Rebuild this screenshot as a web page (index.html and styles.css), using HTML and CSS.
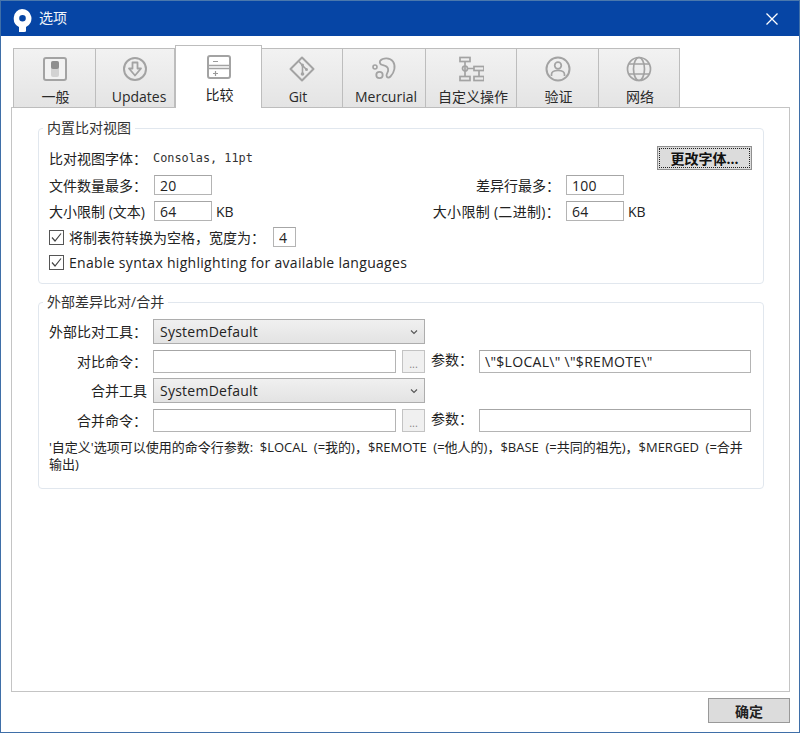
FILE: index.html
```html
<!DOCTYPE html>
<html lang="zh-CN">
<head>
<meta charset="utf-8">
<title>选项</title>
<link rel="stylesheet" href="styles.css">
</head>
<body>
<div class="window">
  <header class="titlebar">
    <svg class="logo" width="22" height="24" viewBox="0 0 22 24"><path fill="#fff" fill-rule="evenodd" d="M11 1a9.500 9.500 0 0 1 4 18.100V23a.8.8 0 0 1-.6.8l-5.600 .9a.8.8 0 0 1-.8-.8v-5A9.500 9.500 0 0 1 11 1zm.5 6a3.300 3.300 0 1 0 0 6.600 3.300 3.300 0 0 0 0-6.600z"/></svg>
    <span class="title">选项</span>
    <svg class="close" width="14" height="14" viewBox="0 0 14 14"><path d="M1.500 1.500l11 11M12.500 1.500l-11 11" stroke="#fff" stroke-width="1.300" fill="none"/></svg>
  </header>
  <main class="content">
    <nav class="tabs">
      <div class="tab tab-general">
        <svg class="icon" viewBox="0 0 26 26"><rect x="2" y="2" width="22" height="22" rx="2" fill="#f2f2f2" stroke="#a3a3a3" stroke-width="2"/><rect x="9" y="5" width="8" height="16" rx="2" fill="#d2d2d2"/><rect x="9" y="5" width="8" height="8" rx="2" fill="#8e8e8e"/></svg>
        <span>一般</span>
      </div>
      <div class="tab tab-updates">
        <svg class="icon" viewBox="0 0 26 26"><circle cx="13" cy="13" r="11" fill="none" stroke="#a3a3a3" stroke-width="2"/><path d="M10.500 6.500h5v6h3.500L13 19.500 7 12.500h3.500z" fill="none" stroke="#a3a3a3" stroke-width="1.800" stroke-linejoin="round"/></svg>
        <span>Updates</span>
      </div>
      <div class="tab tab-active tab-compare">
        <svg class="icon" viewBox="0 0 26 26"><rect x="2" y="2" width="22" height="22" rx="2" fill="none" stroke="#a3a3a3" stroke-width="2"/><path d="M2 11.500h22M2 14.500h22" stroke="#a3a3a3" stroke-width="1.500" fill="none"/><path d="M7 7.500h5M7 19.500h5M9.500 17v5" stroke="#9a9a9a" stroke-width="1.200" fill="none"/></svg>
        <span>比较</span>
      </div>
      <div class="tab tab-git">
        <svg class="icon" viewBox="0 0 26 26"><path d="M13 1.500L24.500 13 13 24.500 1.500 13z" fill="none" stroke="#a3a3a3" stroke-width="2" stroke-linejoin="round"/><path d="M10 5.500l3.500 4v8M13.500 9.500l4 4" fill="none" stroke="#a3a3a3" stroke-width="1.600"/><circle cx="13.500" cy="18" r="1.800" fill="#a3a3a3"/><circle cx="13.500" cy="9" r="1.500" fill="#a3a3a3"/><circle cx="17.500" cy="13.500" r="1.500" fill="#a3a3a3"/></svg>
        <span>Git</span>
      </div>
      <div class="tab tab-hg">
        <svg class="icon" viewBox="0 0 26 26"><path d="M9 5C12 1.500 19 1.500 22 5.500c3 4.500 1.500 11-2.500 15-1.500 1.500-4 1.500-4-1 0-2.500 2.500-3.500 1.500-7-.7-2.500-3.500-3-5.500-3.500C9.500 8.500 8.500 7 9 5z" fill="none" stroke="#a3a3a3" stroke-width="1.800"/><circle cx="4" cy="11" r="2" fill="none" stroke="#a3a3a3" stroke-width="1.600"/><circle cx="8.500" cy="19" r="3.200" fill="none" stroke="#a3a3a3" stroke-width="1.800"/></svg>
        <span>Mercurial</span>
      </div>
      <div class="tab tab-custom">
        <svg class="icon" viewBox="0 0 26 26"><g fill="none" stroke="#a3a3a3" stroke-width="1.700"><rect x="2" y="1.500" width="10" height="4"/><rect x="2" y="20.500" width="10" height="4"/><rect x="16" y="10.500" width="10" height="4"/><rect x="16" y="20.500" width="10" height="4"/><path d="M7 5.500v15M10 12.500h6M21 14.500v6"/><circle cx="7" cy="12.500" r="2.500"/></g></svg>
        <span>自定义操作</span>
      </div>
      <div class="tab tab-auth">
        <svg class="icon" viewBox="0 0 26 26"><circle cx="13" cy="13" r="11.500" fill="none" stroke="#a3a3a3" stroke-width="2"/><circle cx="13" cy="9.500" r="3.300" fill="none" stroke="#a3a3a3" stroke-width="1.700"/><path d="M6.500 20v-1.500c0-2.500 2.500-4 6.500-4s6.500 1.500 6.500 4V20" fill="none" stroke="#a3a3a3" stroke-width="1.700"/></svg>
        <span>验证</span>
      </div>
      <div class="tab tab-network">
        <svg class="icon" viewBox="0 0 26 26"><g fill="none" stroke="#a3a3a3" stroke-width="1.700"><circle cx="13" cy="13" r="11.500"/><ellipse cx="13" cy="13" rx="5.500" ry="11.500"/><path d="M3 8h20M3 18h20"/></g></svg>
        <span>网络</span>
      </div>
    </nav>
    <section class="panel">
      <fieldset class="group group-builtin">
        <legend>内置比对视图</legend>
        <div class="row-font">
          <span class="font-label">比对视图字体：</span>
          <span class="font-value">Consolas, 11pt</span>
          <button class="btn btn-font" type="button">更改字体...</button>
        </div>
        <div class="limits">
          <label class="lbl-left">文件数量最多：</label>
          <input class="field" value="20">
          <span></span>
          <label class="lbl-right">差异行最多：</label>
          <input class="field" value="100">
          <span></span>
          <label class="lbl-left">大小限制 (文本)</label>
          <input class="field" value="64">
          <span class="unit">KB</span>
          <label class="lbl-right lbl-wide">大小限制 (二进制)：</label>
          <input class="field" value="64">
          <span class="unit">KB</span>
        </div>
        <div class="check-row check-tabs">
          <span class="check"><svg width="15" height="15" viewBox="0 0 15 15"><rect x=".5" y=".5" width="14" height="14" fill="#fff" stroke="#555"/><path d="M3 7.500l3 3.500 6-7.500" fill="none" stroke="#444" stroke-width="1.200"/></svg></span>
          <span>将制表符转换为空格，宽度为：</span>
          <input class="field field-tab" value="4">
        </div>
        <div class="check-row check-syntax">
          <span class="check"><svg width="15" height="15" viewBox="0 0 15 15"><rect x=".5" y=".5" width="14" height="14" fill="#fff" stroke="#555"/><path d="M3 7.500l3 3.500 6-7.500" fill="none" stroke="#444" stroke-width="1.200"/></svg></span>
          <span class="syntax-text">Enable syntax highlighting for available languages</span>
        </div>
      </fieldset>
      <fieldset class="group group-external">
        <legend>外部差异比对/合并</legend>
        <div class="tools">
          <label class="tool-label tool-label-tall">外部比对工具：</label>
          <div class="select"><span>SystemDefault</span><svg width="8" height="6" viewBox="0 0 8 6"><path d="M1 1.500l3 3 3-3" fill="none" stroke="#555" stroke-width="1.100"/></svg></div>
          <span class="tool-fill"></span>
          <label class="tool-label">对比命令：</label>
          <input class="field field-wide">
          <button class="btn-more" type="button">...</button>
          <label class="param-label">参数：</label>
          <input class="field field-wide" value="\&quot;$LOCAL\&quot; \&quot;$REMOTE\&quot;">
          <label class="tool-label tool-label-tall">合并工具</label>
          <div class="select"><span>SystemDefault</span><svg width="8" height="6" viewBox="0 0 8 6"><path d="M1 1.500l3 3 3-3" fill="none" stroke="#555" stroke-width="1.100"/></svg></div>
          <span class="tool-fill"></span>
          <label class="tool-label">合并命令：</label>
          <input class="field field-wide">
          <button class="btn-more" type="button">...</button>
          <label class="param-label">参数：</label>
          <input class="field field-wide">
        </div>
        <p class="note">'自定义'选项可以使用的命令行参数: $LOCAL (=我的)，$REMOTE (=他人的)，$BASE (=共同的祖先)，$MERGED (=合并输出)</p>
      </fieldset>
    </section>
    <footer class="footer">
      <button class="btn btn-ok" type="button">确定</button>
    </footer>
  </main>
</div>
</body>
</html>
```
FILE: styles.css
```css
* { box-sizing: border-box; }
html, body { margin: 0; padding: 0; height: 100%; }
body {
  font-family: "Open Sans", "Noto Sans CJK SC", sans-serif;
  font-size: 14px;
  color: #222;
  background: #fff;
  overflow: hidden;
}
.window {
  height: 733px;
  display: flex;
  flex-direction: column;
  border: 1px solid #3f6fa8;
  border-top-color: #4a78ad;
}
.titlebar {
  height: 35px;
  flex: none;
  background: #0645a5;
  display: flex;
  align-items: center;
  padding: 0 20px 0 10px;
  color: #f2f5fa;
}
.logo { margin-top: 2px; }
.title { margin-left: 6px; font-size: 14px; line-height: 18px; margin-top: -2px; }
.close { margin-left: auto; }
.content {
  flex: 1;
  display: flex;
  flex-direction: column;
  padding: 10px 9px 0 10px;
  min-height: 0;
}
.tabs {
  display: flex;
  align-items: flex-end;
  padding-left: 2px;
  height: 62px;
  flex: none;
  position: relative;
  z-index: 1;
  margin-bottom: -1px;
}
.tab {
  height: 60px;
  display: flex;
  flex-direction: column;
  align-items: center;
  justify-content: flex-start;
  padding-top: 7px;
  background: linear-gradient(#f2f2f2, #e4e4e4);
  border: 1px solid #bdbdbd;
  border-left-width: 0;
  color: #2a2a2a;
  line-height: 20px;
}
.tab:first-child { border-left-width: 1px; }
.tab .icon { width: 26px; height: 26px; margin-bottom: 5px; }
.tab span { margin-left: 2px; }
.tab-general { width: 83px; }
.tab-updates { width: 79px; }
.tab-compare { width: 87px; }
.tab-git { width: 81px; }
.tab-hg { width: 83px; }
.tab-custom { width: 91px; }
.tab-auth { width: 82px; }
.tab-network { width: 81px; }
.tab-updates span { margin-left: 8px; }
.tab-git span { margin-left: 0; margin-right: 8px; }
.tab-hg span { margin-left: 4px; }
.tab-custom span { margin-left: 4px; }
.tab-active {
  height: 63px;
  background: #fff;
  border-left-width: 1px;
  border-bottom: 0;
  padding-top: 8px;
  color: #222;
}
.panel {
  flex: 1;
  border: 1px solid #c4c4c4;
  padding: 11px 25px 0 26px;
  min-height: 0;
}
.group {
  margin: 0;
  padding: 0 11px 0 10px;
  border: 1px solid #e1e7ee;
  border-radius: 4px;
  min-width: 0;
}
.group legend {
  margin-left: -6px;
  padding: 0 4px;
  line-height: 18px;
  font-size: 14px;
  color: #333;
}
.group-builtin { height: 165px; margin-bottom: 9px; }
.group-external { height: 196px; }
.row-font {
  display: flex;
  align-items: center;
  height: 24px;
  margin-top: 9px;
}
.font-label { width: 104px; }
.font-value { font-family: "DejaVu Sans Mono", monospace; font-size: 11.85px; color: #333; }
.btn {
  font: inherit;
  color: #111;
  background: #dcdcdc;
  border: 1px solid #8f8f8f;
  padding: 0;
  font-weight: 700;
}
.btn-font {
  margin-left: auto;
  width: 95px;
  height: 24px;
  outline: 1px dotted #222;
  outline-offset: -3px;
}
.limits {
  display: grid;
  grid-template-columns: 105px 58px 43px 1fr 58px 128px;
  grid-auto-rows: 20px;
  row-gap: 6px;
  margin-top: 5px;
  align-items: center;
}
.lbl-left { white-space: nowrap; }
.lbl-right { text-align: right; padding-right: 6px; white-space: nowrap; }
.lbl-wide { letter-spacing: .3px; }
.unit { padding-left: 4px; }
.field {
  font: inherit;
  letter-spacing: .3px;
  color: #222;
  height: 100%;
  width: 100%;
  border: 1px solid #b4b4b4;
  border-top-color: #a6a6a6;
  background: #fff;
  padding: 0 5px;
  outline: 0;
  border-radius: 0;
}
.check-row {
  display: flex;
  align-items: center;
  height: 20px;
}
.check { display: flex; margin-right: 5px; width: 15px; }
.check-tabs { margin-top: 6px; }
.check-syntax { margin-top: 5px; }
.syntax-text { letter-spacing: .3px; }
.field-tab { width: 23px; height: 20px; margin-left: 8px; }
.tools {
  display: grid;
  grid-template-columns: 104px 243px 29px 54px 272px;
  grid-template-rows: 31px 28px 31px 28px;
  align-items: start;
  margin-top: 8px;
}
.tool-label { text-align: right; padding-right: 6px; line-height: 23px; white-space: nowrap; }
.tool-label-tall { line-height: 25px; }
.param-label { line-height: 20px; padding-left: 6px; white-space: nowrap; }
.select {
  grid-column: 2 / 4;
  height: 25px;
  letter-spacing: .25px;
  background: linear-gradient(#f0f0f0, #e3e3e3);
  border: 1px solid #adadad;
  display: flex;
  align-items: center;
  justify-content: space-between;
  padding: 0 6px;
}
.tool-fill { grid-column: 4 / 6; height: 25px; }
.field-wide { height: 23px; }
.btn-more {
  margin-left: 6px;
  width: 23px;
  height: 23px;
  background: #f0f0f0;
  border: 1px solid #c3c3c3;
  color: #888;
  font: 11px "Open Sans", sans-serif;
  padding: 4px 0 0;
}
.note {
  margin: 2px 0 0;
  font-size: 13px;
  word-spacing: 3.2px;
  line-height: 17px;
  color: #222;
}
.footer {
  flex: none;
  height: 40px;
  display: flex;
  justify-content: flex-end;
  align-items: flex-start;
  padding-top: 6px;
}
.btn-ok { width: 82px; height: 25px; background: #dcdcdc; border-color: #999; color: #222; }
```
